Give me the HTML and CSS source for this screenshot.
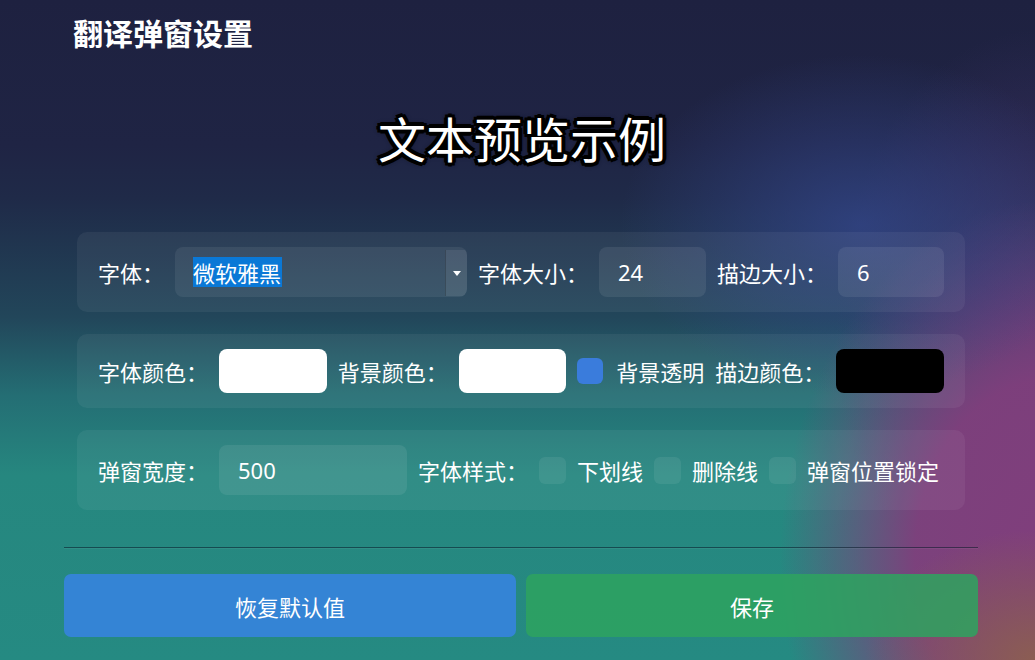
FILE: index.html
```html
<!DOCTYPE html>
<html lang="zh-CN">
<head>
<meta charset="utf-8">
<title>翻译弹窗设置</title>
<link rel="stylesheet" href="styles.css">
</head>
<body>
<div class="page">
  <h1 class="title">翻译弹窗设置</h1>
  <div class="preview">文本预览示例</div>

  <div class="panels">
    <div class="row row-tall">
      <span class="label">字体：</span>
      <div class="select">
        <span class="select-text"><span class="sel">微软雅黑</span></span>
        <span class="select-arrow"><span class="tri"></span></span>
      </div>
      <span class="label">字体大小：</span>
      <div class="input w107">24</div>
      <span class="label">描边大小：</span>
      <div class="input w106">6</div>
    </div>

    <div class="row row-short">
      <span class="label">字体颜色：</span>
      <div class="swatch white"></div>
      <span class="label">背景颜色：</span>
      <div class="swatch white"></div>
      <span class="check checked"></span>
      <span class="label">背景透明</span>
      <span class="label">描边颜色：</span>
      <div class="swatch black"></div>
    </div>

    <div class="row row-tall">
      <span class="label">弹窗宽度：</span>
      <div class="input w188">500</div>
      <span class="label">字体样式：</span>
      <span class="check"></span>
      <span class="label">下划线</span>
      <span class="check"></span>
      <span class="label">删除线</span>
      <span class="check"></span>
      <span class="label">弹窗位置锁定</span>
    </div>
  </div>

  <div class="divider"></div>

  <div class="buttons">
    <button class="btn btn-blue">恢复默认值</button>
    <button class="btn btn-green">保存</button>
  </div>
</div>
</body>
</html>
```

FILE: styles.css
```css
html, body {
  margin: 0;
  padding: 0;
}

body {
  width: 1035px;
  height: 660px;
  overflow: hidden;
  color: #ffffff;
  font-family: "Noto Sans CJK SC", "Noto Sans", sans-serif;
  background:
    radial-gradient(ellipse 240px 170px at 860px 225px, rgba(52, 70, 140, 0.75), rgba(52, 70, 140, 0) 100%),
    radial-gradient(ellipse 170px 130px at 1035px 660px, rgba(140, 95, 80, 0.95), rgba(140, 95, 80, 0) 100%),
    radial-gradient(ellipse 270px 360px at 1050px 560px, rgba(128, 62, 124, 1) 0%, rgba(128, 62, 124, 0.95) 50%, rgba(128, 62, 124, 0) 100%),
    radial-gradient(ellipse 200px 300px at 1035px 330px, rgba(80, 55, 120, 0.7), rgba(80, 55, 120, 0) 100%),
    linear-gradient(180deg, #1e2140 0%, #1f2444 22%, #1f2a48 30%, #22465a 48%, #246e74 60%, #26877f 72%, #258a82 100%);
}

.page {
  width: 914px;
  margin-left: 64px;
  padding-top: 12px;
}

.title {
  margin: 0 0 0 9px;
  font-size: 30px;
  line-height: 40px;
  font-weight: 700;
  letter-spacing: 0;
}

.preview {
  margin-top: 49px;
  text-align: center;
  font-size: 48px;
  line-height: 72px;
  font-weight: 400;
  padding-left: 2px;
  text-shadow:
    -4px 0 0 #000, 4px 0 0 #000, 0 -4px 0 #000, 0 4px 0 #000,
    -3px -3px 0 #000, 3px -3px 0 #000, -3px 3px 0 #000, 3px 3px 0 #000,
    -2px 0 0 #000, 2px 0 0 #000, 0 -2px 0 #000, 0 2px 0 #000,
    0 0 5px #000, 0 0 6px rgba(0, 0, 0, 0.8);
}

.panels {
  margin: 59px 13px 0 13px;
  display: flex;
  flex-direction: column;
  gap: 22px;
}

.row {
  display: flex;
  align-items: center;
  gap: 11px;
  padding: 0 21px;
  border-radius: 10px;
  background: rgba(255, 255, 255, 0.055);
  font-size: 22px;
}

.row-tall {
  height: 80px;
}

.row-short {
  height: 74px;
}

.label {
  white-space: nowrap;
  line-height: 30px;
}

.select {
  width: 292px;
  height: 50px;
  display: flex;
  border-radius: 8px;
  background: rgba(255, 255, 255, 0.07);
  overflow: hidden;
}

.select-text {
  flex: 1;
  display: flex;
  align-items: center;
  padding-left: 18px;
}

.sel {
  background: #0a78d6;
  line-height: 30px;
  padding-right: 1px;
}

.select-arrow {
  width: 21px;
  margin: 3px 0 1px 0;
  border-left: 1px solid rgba(0, 0, 0, 0.22);
  background: rgba(255, 255, 255, 0.08);
  display: flex;
  align-items: center;
  justify-content: center;
}

.tri {
  width: 0;
  height: 0;
  border-left: 4px solid transparent;
  border-right: 4px solid transparent;
  border-top: 5px solid #ffffff;
}

.input {
  height: 50px;
  display: flex;
  align-items: center;
  padding-left: 19px;
  box-sizing: border-box;
  border-radius: 8px;
  background: rgba(255, 255, 255, 0.08);
  font-family: "Noto Sans", "Open Sans", sans-serif;
  font-size: 22px;
}

.w107 { width: 107px; }
.w106 { width: 106px; }
.w188 { width: 188px; }

.swatch {
  width: 108px;
  height: 44px;
  border-radius: 8px;
}

.swatch.white {
  background: #ffffff;
}

.swatch.black {
  background: #000000;
}

.check {
  width: 27px;
  height: 27px;
  flex: none;
  border-radius: 6px;
  background: rgba(255, 255, 255, 0.07);
}

.check.checked {
  width: 26px;
  height: 26px;
  background: #3a7cdc;
  margin-right: 2px;
}

.divider {
  margin-top: 37px;
  height: 1px;
  background: rgba(10, 25, 40, 0.55);
  box-shadow: 0 1px 0 rgba(255, 255, 255, 0.05);
}

.buttons {
  margin-top: 26px;
  display: flex;
  gap: 10px;
}

.btn {
  flex: 1;
  height: 63px;
  border: none;
  border-radius: 7px;
  color: #ffffff;
  font-family: "Noto Sans CJK SC", "Noto Sans", sans-serif;
  font-size: 22px;
  padding: 0;
}

.btn-blue {
  background: rgba(53, 132, 216, 0.97);
}

.btn-green {
  background: rgba(46, 163, 95, 0.85);
}
```
